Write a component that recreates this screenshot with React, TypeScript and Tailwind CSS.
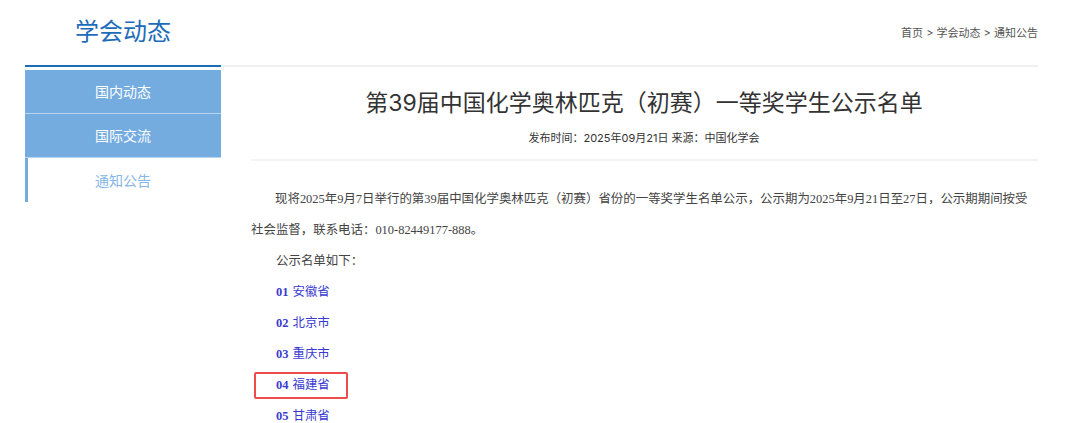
import React from 'react';

const serif = { fontFamily: '"Liberation Serif", "Noto Sans CJK SC", serif' };

const menu = [
  { name: '国内动态', active: false },
  { name: '国际交流', active: false },
  { name: '通知公告', active: true },
];

const provinces = [
  { no: '01', name: '安徽省' },
  { no: '02', name: '北京市' },
  { no: '03', name: '重庆市' },
  { no: '04', name: '福建省', marked: true },
  { no: '05', name: '甘肃省' },
];

const App = () => {
  return (
    <div
      className="w-[1080px] h-[423px] bg-white overflow-hidden"
      style={{ fontFamily: 'Inter, "Noto Sans CJK SC", sans-serif' }}
    >
      <div className="ml-[25px] w-[1013px]">
        {/* header */}
        <div className="flex items-center justify-between h-[65px]">
          <div className="w-[196px] text-center text-[24px] text-[#1d6cb9] pb-[2px]">学会动态</div>
          <div className="text-[11px] text-[#555] pt-[2px]">首页 &gt; 学会动态 &gt; 通知公告</div>
        </div>
        <div className="flex">
          <div className="w-[196px] h-[2px] bg-[#1d6cb9]"></div>
          <div className="flex-1 h-[2px] bg-[#f0f0f0]"></div>
        </div>

        <div className="flex mt-[3px]">
          {/* sidebar */}
          <div className="w-[196px] shrink-0">
            {menu.map((m) =>
              m.active ? (
                <div
                  key={m.name}
                  className="h-[44px] flex items-center justify-center border-l-[3px] border-[#74acdf] text-[14px] text-[#86b6e6] pr-[3px]"
                >
                  {m.name}
                </div>
              ) : (
                <div
                  key={m.name}
                  className="h-[44px] flex items-center justify-center bg-[#74acdf] border-b border-[#b9d6f1] text-[14px] text-white pb-[1px]"
                >
                  {m.name}
                </div>
              )
            )}
          </div>

          {/* content */}
          <div className="flex-1 min-w-0 ml-[29px]">
            <h1 className="text-center text-[23px] text-[#333] mt-[18px] leading-[30px]">
              第39届中国化学奥林匹克（初赛）一等奖学生公示名单
            </h1>
            <div className="text-center text-[11px] text-[#333] mt-[12px] leading-[16px]">
              发布时间：2025年09月21日 来源：中国化学会
            </div>
            <div className="h-[2px] bg-[#f3f3f3] mt-[13px] ml-[1px]"></div>

            <div className="mt-[23px] text-[12.45px] text-[#444]" style={serif}>
              <div className="h-[31px] flex items-center pl-[25px] whitespace-nowrap">
                现将2025年9月7日举行的第39届中国化学奥林匹克（初赛）省份的一等奖学生名单公示，公示期为2025年9月21日至27日，公示期期间按受
              </div>
              <div className="h-[31px] flex items-center pl-[1px]">
                社会监督，联系电话：010-82449177-888。
              </div>
              <div className="h-[31px] flex items-center pl-[26px]">公示名单如下：</div>
              {provinces.map((p) =>
                p.marked ? (
                  <div key={p.no} className="h-[31px] flex items-center">
                    <div className="ml-[4px] w-[94px] h-[27px] border-2 border-[#ee4b4b] rounded-[2px] pl-[20px] flex items-center text-[#3a3acf]">
                      <span className="font-bold">{p.no}</span>
                      <span className="ml-[4px]">{p.name}</span>
                    </div>
                  </div>
                ) : (
                  <div key={p.no} className="pl-[26px] h-[31px] flex items-center text-[#3a3acf]">
                    <span className="font-bold">{p.no}</span>
                    <span className="ml-[4px]">{p.name}</span>
                  </div>
                )
              )}
            </div>
          </div>
        </div>
      </div>
    </div>
  );
};

export default App;
